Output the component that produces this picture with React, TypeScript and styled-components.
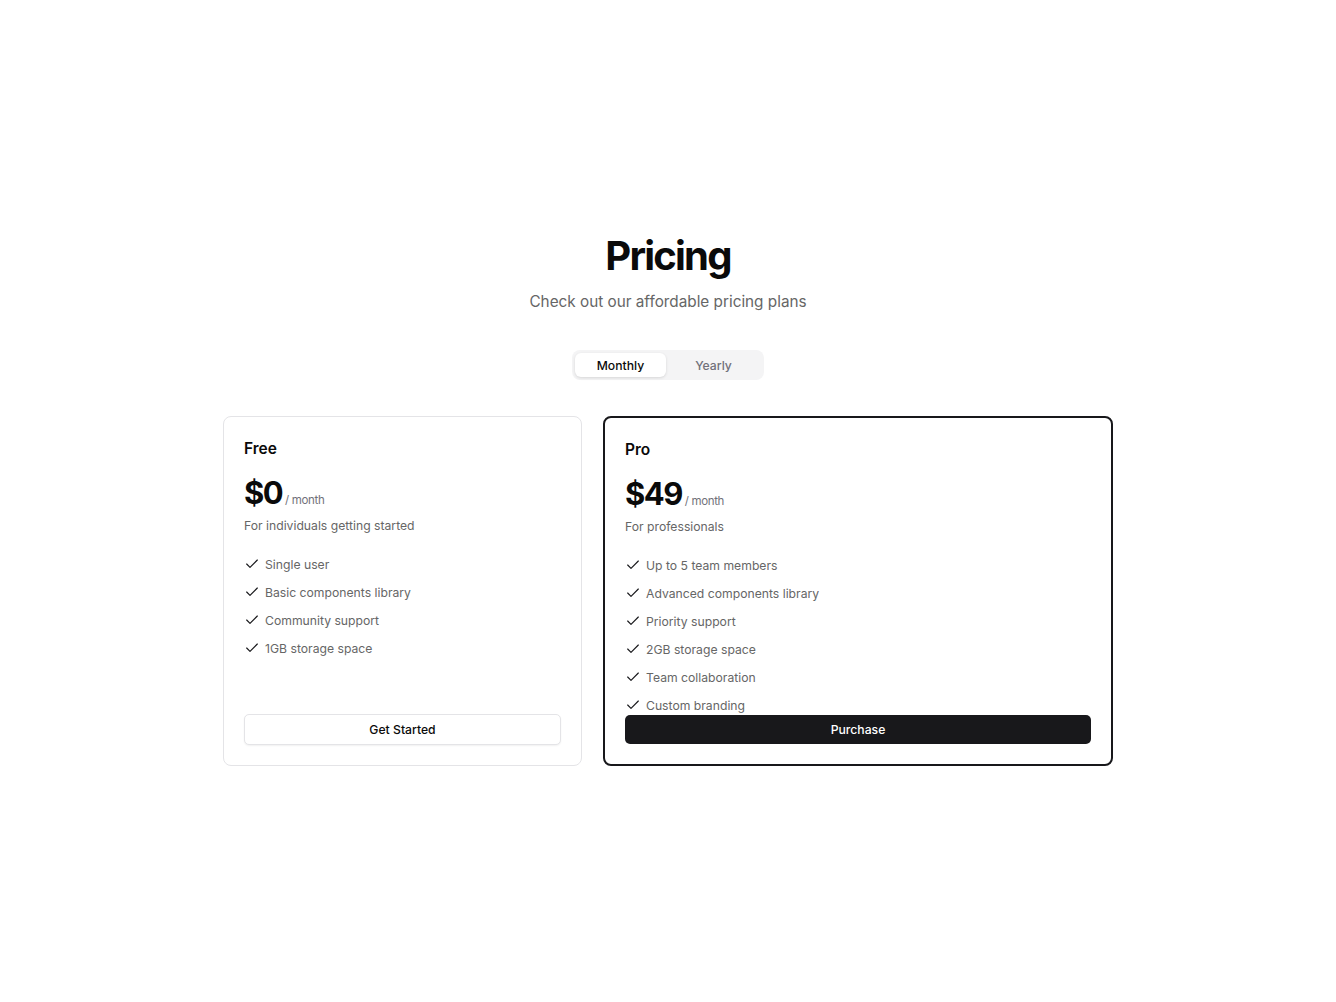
import { useState } from 'react';
import styled, { createGlobalStyle } from 'styled-components';
import { Check } from 'lucide-react';

const GlobalStyle = createGlobalStyle`
  * { box-sizing: border-box; }
  body {
    margin: 0;
    background: #ffffff;
    font-family: Inter, "Liberation Sans", sans-serif;
    color: #0a0a0a;
    -webkit-font-smoothing: antialiased;
  }
`;

const Page = styled.main`
  min-height: 100vh;
  display: flex;
  flex-direction: column;
  align-items: center;
  padding-top: 232px;
`;

const Title = styled.h1`
  margin: 0;
  font-size: 40px;
  line-height: 48px;
  font-weight: 700;
  letter-spacing: -0.045em;
`;

const Subtitle = styled.p`
  margin: 10px 0 0;
  font-size: 15.3px;
  line-height: 24px;
  color: #666666;
`;

const Toggle = styled.div`
  margin-top: 36px;
  display: flex;
  padding: 3px;
  border-radius: 8px;
  background: #f4f4f5;
`;

const ToggleTab = styled.button<{ $active: boolean }>`
  border: 0;
  height: 24px;
  width: ${(p) => (p.$active ? 91 : 95)}px;
  border-radius: 6px;
  font-family: inherit;
  font-size: 12.2px;
  font-weight: 500;
  cursor: pointer;
  color: ${(p) => (p.$active ? '#0a0a0a' : '#71717a')};
  background: ${(p) => (p.$active ? '#ffffff' : 'transparent')};
  box-shadow: ${(p) => (p.$active ? '0 1px 3px rgba(0,0,0,0.12)' : 'none')};
`;

const Cards = styled.section`
  margin-top: 36px;
  display: grid;
  grid-template-columns: 359px 510px;
  gap: 21px;
`;

const Card = styled.article<{ $featured: boolean }>`
  height: 350px;
  display: flex;
  flex-direction: column;
  padding: 20px;
  border-radius: 8px;
  border: ${(p) => (p.$featured ? '2px solid #18181b' : '1px solid #e4e4e7')};
`;

const PlanName = styled.h2`
  margin: 0;
  flex-shrink: 0;
  font-size: 15.5px;
  line-height: 24px;
  font-weight: 600;
`;

const PriceRow = styled.div`
  margin-top: 12px;
  flex-shrink: 0;
  display: flex;
  align-items: baseline;
  gap: 3px;
  height: 40px;
`;

const Amount = styled.span`
  font-size: 31px;
  line-height: 40px;
  font-weight: 700;
  letter-spacing: -0.05em;
`;

const Period = styled.span`
  font-size: 11.5px;
  color: #71717a;
  letter-spacing: -0.03em;
`;

const Description = styled.p`
  margin: 3px 0 0;
  flex-shrink: 0;
  font-size: 12.2px;
  line-height: 20px;
  color: #666666;
`;

const Features = styled.ul`
  margin: 18px 0 0;
  padding: 0;
  list-style: none;
  flex-shrink: 0;
  display: flex;
  flex-direction: column;
  gap: 8px;
`;

const Feature = styled.li`
  display: flex;
  align-items: center;
  gap: 5px;
  height: 20px;
  font-size: 12.2px;
  color: #666666;

  & > svg {
    color: #18181b;
    flex-shrink: 0;
  }
`;

const ActionButton = styled.button<{ $primary: boolean }>`
  margin-top: auto;
  height: 31px;
  min-height: 0;
  flex-shrink: 1;
  width: 100%;
  border-radius: 5px;
  font-family: inherit;
  font-size: 12.2px;
  font-weight: 500;
  cursor: pointer;
  border: ${(p) => (p.$primary ? '0' : '1px solid #e4e4e7')};
  color: ${(p) => (p.$primary ? '#ffffff' : '#0a0a0a')};
  background: ${(p) => (p.$primary ? '#18181b' : '#ffffff')};
  box-shadow: ${(p) => (p.$primary ? 'none' : '0 1px 2px rgba(0,0,0,0.06)')};
`;

const plans = [
  {
    name: 'Free',
    price: '$0',
    description: 'For individuals getting started',
    features: ['Single user', 'Basic components library', 'Community support', '1GB storage space'],
    action: 'Get Started',
    featured: false,
  },
  {
    name: 'Pro',
    price: '$49',
    description: 'For professionals',
    features: [
      'Up to 5 team members',
      'Advanced components library',
      'Priority support',
      '2GB storage space',
      'Team collaboration',
      'Custom branding',
    ],
    action: 'Purchase',
    featured: true,
  },
];

export default function App() {
  const [period, setPeriod] = useState<'monthly' | 'yearly'>('monthly');

  return (
    <Page>
      <GlobalStyle />
      <Title>Pricing</Title>
      <Subtitle>Check out our affordable pricing plans</Subtitle>

      <Toggle>
        <ToggleTab $active={period === 'monthly'} onClick={() => setPeriod('monthly')}>
          Monthly
        </ToggleTab>
        <ToggleTab $active={period === 'yearly'} onClick={() => setPeriod('yearly')}>
          Yearly
        </ToggleTab>
      </Toggle>

      <Cards>
        {plans.map((plan) => (
          <Card key={plan.name} $featured={plan.featured}>
            <PlanName>{plan.name}</PlanName>
            <PriceRow>
              <Amount>{plan.price}</Amount>
              <Period>/ month</Period>
            </PriceRow>
            <Description>{plan.description}</Description>
            <Features>
              {plan.features.map((f) => (
                <Feature key={f}>
                  <Check size={16} strokeWidth={1.75} />
                  {f}
                </Feature>
              ))}
            </Features>
            <ActionButton $primary={plan.featured}>{plan.action}</ActionButton>
          </Card>
        ))}
      </Cards>
    </Page>
  );
}
